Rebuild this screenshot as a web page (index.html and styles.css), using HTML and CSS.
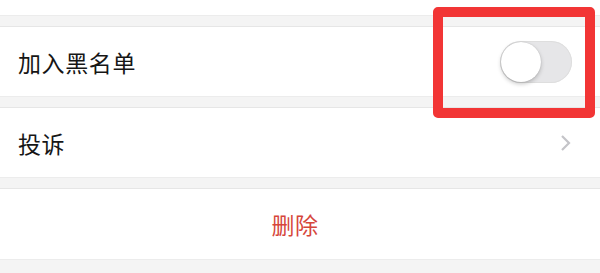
FILE: index.html
```html
<!DOCTYPE html>
<html lang="zh">
<head>
<meta charset="utf-8">
<link rel="stylesheet" href="styles.css">
</head>
<body>
<div class="page">
  <div class="top"></div>
  <div class="gap"></div>
  <div class="row">
    <span class="label">加入黑名单</span>
    <span class="switch"><span class="knob"></span></span>
  </div>
  <div class="gap"></div>
  <div class="row">
    <span class="label">投诉</span>
    <svg class="chev" width="12" height="18" viewBox="0 0 12 18"><path d="M2 2 L9 9 L2 16" fill="none" stroke="#c4c4c8" stroke-width="2.2"/></svg>
  </div>
  <div class="gap"></div>
  <div class="row center">
    <span class="danger">删除</span>
  </div>
  <div class="gap last"></div>
  <div class="highlight"></div>
</div>
</body>
</html>
```
FILE: styles.css
```css
html, body {
  margin: 0;
  padding: 0;
  background: #f4f4f4;
}
.page {
  position: relative;
  width: 600px;
  height: 273px;
  overflow: hidden;
  font-family: "Noto Sans CJK SC", "Noto Sans", sans-serif;
}
.top {
  height: 15px;
  background: #fff;
}
.gap {
  height: 11px;
  background: #f4f4f4;
  border-top: 1px solid #ececec;
  box-sizing: border-box;
}
.gap.last {
  height: 20px;
}
.row {
  height: 70px;
  background: #fff;
  border-top: 1px solid #e6e6e6;
  box-sizing: border-box;
  display: flex;
  align-items: center;
  justify-content: space-between;
  padding: 0 28px 0 18px;
}
.row.center {
  justify-content: center;
  height: 71px;
}
.label {
  font-size: 23px;
  color: #161616;
  letter-spacing: 0.6px;
}
.danger {
  font-size: 23px;
  color: #d6463b;
  letter-spacing: 0.5px;
}
.switch {
  width: 72px;
  height: 42px;
  border-radius: 21px;
  background: #e6e6e8;
  position: relative;
  box-shadow: inset 0 0 0 1px #dedede;
}
.knob {
  position: absolute;
  left: 1px;
  top: 1px;
  width: 40px;
  height: 40px;
  border-radius: 50%;
  background: #fff;
  box-shadow: 0 2px 4px rgba(0,0,0,0.22), 0 0 1px rgba(0,0,0,0.2);
}
.highlight {
  position: absolute;
  left: 433px;
  top: 7px;
  width: 162px;
  height: 111px;
  box-sizing: border-box;
  border: 10px solid #f23535;
  border-radius: 5px;
}
```
